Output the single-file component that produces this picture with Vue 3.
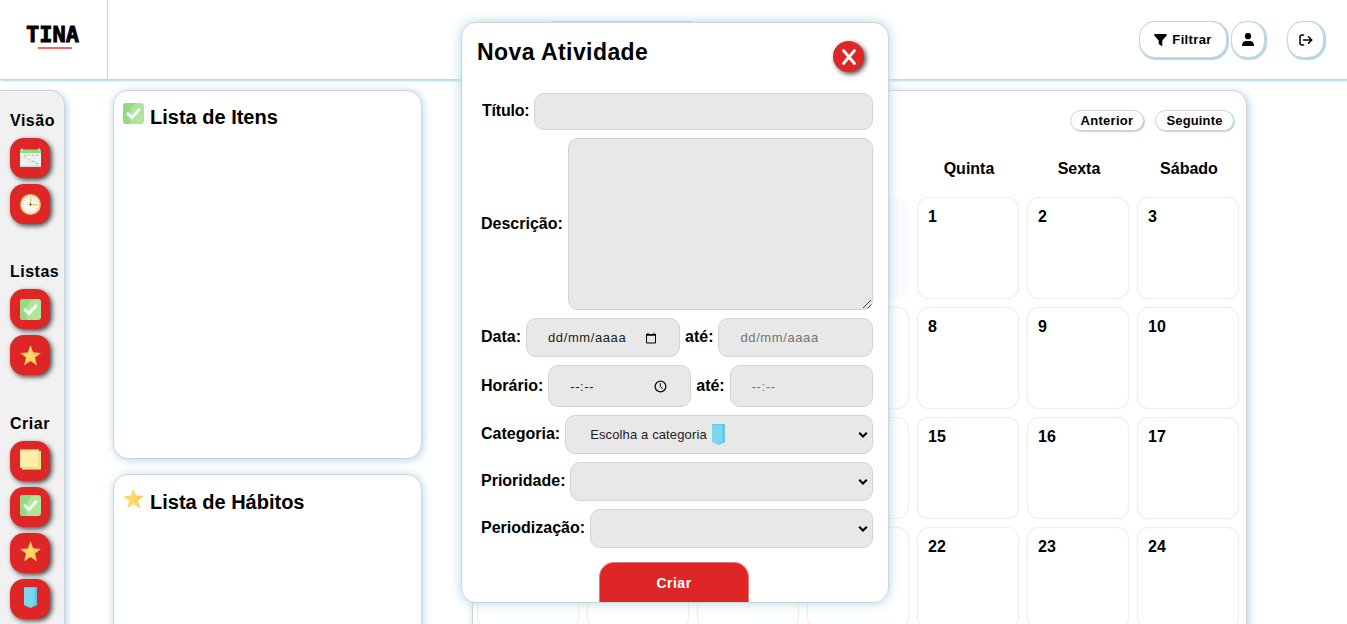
<script setup>
const groups = [
  { title: 'Visão', icons: ['calendar', 'clock'] },
  { title: 'Listas', icons: ['check', 'star'] },
  { title: 'Criar', icons: ['note', 'check', 'star', 'tag'], raised: true },
]
const weekdays = ['', '', '', '', 'Quinta', 'Sexta', 'Sábado']
const days = Array.from({ length: 28 }, (_, i) => ({
  off: i < 4,
  label: i % 7 > 3 ? i - 3 : '',
}))
</script>

<template>
  <svg class="sprite" aria-hidden="true">
    <symbol id="calendar" viewBox="0 0 21 21">
      <rect x="0" y="2" width="21" height="17" rx="1" fill="#f1f4f5" />
      <rect x="0" y="17.500" width="21" height="1.500" fill="#d5d9dc" />
      <path d="M0 5V2.500q0-1 1-1h19q1 0 1 1V5z" fill="#8fdc7c" />
      <path d="M2 .5v2.500M19 .5v2.500" stroke="#dce8dc" stroke-width="1.500" />
      <path d="M4 7.200h2.500m1.500 0h2.500m1.500 0h2.500m1.500 0h2.500" stroke="#8fcf88" stroke-width="1" />
      <path d="M3.500 9.500h3M7.500 11.500h3" stroke="#ffd778" stroke-width="2" />
      <path d="M11.500 13.500h3M15.500 15.500h3" stroke="#a0dd98" stroke-width="2" />
      <path d="M7 8.500v8M11 8.500v8M15 8.500v8M3 10.500h16M3 14h16" stroke="#dfe3e4" stroke-width=".4" />
    </symbol>
    <symbol id="clock" viewBox="0 0 21 21">
      <circle cx="10.500" cy="10.500" r="9.700" fill="#f8f7f2" stroke="#f8c456" stroke-width="1.600" />
      <path d="M10.500 3v7.500H18" fill="none" stroke="#f5c04e" stroke-width="1" />
      <path d="M9 10.500h3M10.500 9v3" stroke="#666" stroke-width=".9" />
      <circle cx="10.500" cy="10.500" r="7.300" fill="none" stroke="#9a9a9a" stroke-width=".8" stroke-dasharray=".8 3.022" />
    </symbol>
    <symbol id="check" viewBox="0 0 21 21">
      <rect width="21" height="21" rx="3" fill="#afe59b" />
      <path d="M3 0h10Q6 6 6 13q0 5 2 8H3q-3 0-3-3V3q0-3 3-3z" fill="#97d983" />
      <path d="M5 10.800l4 3.700 7-7.700" fill="none" stroke="#fff" stroke-width="2.800" stroke-linecap="round" stroke-linejoin="round" />
      <path d="M5 10.800l1.500 1.400" stroke="#dff4fb" stroke-width="2.600" stroke-linecap="round" />
    </symbol>
    <symbol id="star" viewBox="0 0 21 21">
      <path d="M10.500 .3l2.700 7.200 7.600.4-5.900 4.700 2 7.700-6.400-4.200-6.400 4.200 2-7.700L.2 7.900l7.600-.4z" fill="#ffd766" />
      <path d="M10.500 .3l2.700 7.200 7.600.4-5.900 4.700 2 7.700-2.500-1.600Q15 11 10.500 .3z" fill="#ffc454" opacity=".7" />
    </symbol>
    <symbol id="note" viewBox="0 0 21 21">
      <path d="M2 2h19v18.500H2z" fill="#e3ec94" />
      <path d="M0 .5h19v16L17 18.500H0z" fill="#ffedaa" />
      <path d="M0 .7h19" stroke="#e8a75a" stroke-width="1" stroke-dasharray="1.300 .7" />
      <path d="M0 18.500h17l2-2M18.700 2v15" fill="none" stroke="#f4cf78" stroke-width=".8" />
    </symbol>
    <symbol id="tag" viewBox="0 0 21 21">
      <path d="M4 0h13v18l-6.500 3L4 18z" fill="#7ad7ee" />
      <path d="M14.500 0H17v18l-6.500 3v-1l4-2.500z" fill="#5dc8ec" />
      <path d="M4 0h13v1H4z" fill="#5dc8ec" />
    </symbol>
    <symbol id="chevron" viewBox="0 0 10 8">
      <path d="M1.200 1.700L5 5.500l3.800-3.800" fill="none" stroke="#000" stroke-width="2" />
    </symbol>
  </svg>

  <div class="page">
    <header class="top">
      <div class="brand"><div class="logo">TINA</div></div>
      <div class="month"></div>
      <div class="actions">
        <button class="pill filter">
          <svg width="13" height="12" viewBox="0 0 13 12"><path d="M.8 0h11.400q1 .5.500 1.500L8.300 6.500V11.500q-.4.700-1 .3L4.700 9.900V6.500L.3 1.500Q-.2.500.8 0z" /></svg>
          <span>Filtrar</span>
        </button>
        <button class="pill user">
          <svg width="12" height="13" viewBox="0 0 12 13"><circle cx="6" cy="3.200" r="3.100" /><path d="M0 13q0-5 4.500-5h3q4.500 0 4.500 5z" /></svg>
        </button>
        <button class="pill exit">
          <svg width="14" height="12" viewBox="0 0 14 12" fill="none" stroke="#000" stroke-width="1.500" stroke-linecap="round" stroke-linejoin="round"><path d="M4.500 1H3Q1 1 1 3v6q0 2 2 2h1.500M4.500 6h8M9.500 2.800L12.800 6 9.500 9.200" /></svg>
        </button>
      </div>
    </header>

    <main class="content">
      <nav class="side">
        <section v-for="g in groups" :key="g.title" class="group">
          <h4>{{ g.title }}</h4>
          <button v-for="i in g.icons" :key="i" class="tool" :class="{ raised: g.raised }">
            <svg width="21" height="21"><use :href="'#' + i" /></svg>
          </button>
        </section>
      </nav>

      <div class="lists">
        <section class="card">
          <svg width="21" height="21"><use href="#check" /></svg>
          <h3>Lista de Itens</h3>
        </section>
        <section class="card habits">
          <svg width="21" height="21"><use href="#star" /></svg>
          <h3>Lista de Hábitos</h3>
        </section>
      </div>

      <section class="calendar">
        <div class="nav"><button class="mini prev">Anterior</button><button class="mini next">Seguinte</button></div>
        <div class="grid heads"><span v-for="(w, i) in weekdays" :key="i">{{ w }}</span></div>
        <div class="grid">
          <div v-for="(d, i) in days" :key="i" class="day" :class="{ off: d.off }">{{ d.label }}</div>
        </div>
      </section>
    </main>

    <form class="modal" @submit.prevent>
      <div class="modal-head">
        <h2>Nova Atividade</h2>
        <button type="button" class="close">
          <svg width="16" height="18" viewBox="0 0 16 18"><path d="M2.500 2.500l11 13M13.500 2.500l-11 13" stroke="#fff" stroke-width="2.800" stroke-linecap="round" /></svg>
        </button>
      </div>
      <div class="row title"><label>Título:</label><div class="field"></div></div>
      <div class="row desc">
        <label>Descrição:</label>
        <div class="field">
          <svg width="10" height="10" viewBox="0 0 10 10"><path d="M1 9L9 1M5.500 9.500l4-4" stroke="#444" stroke-width="1" /></svg>
        </div>
      </div>
      <div class="row date">
        <label>Data:</label>
        <div class="field first"><span>dd/mm/aaaa</span>
          <svg width="12" height="12" viewBox="0 0 12 12"><path d="M1.500 2.500h9v8.500h-9z" fill="none" stroke="#000" /><path d="M1 2h10v1.800H1zM2.500 .8h1V2h-1zM8.500 .8h1V2h-1z" /></svg>
        </div>
        <label>até:</label>
        <div class="field muted"><span>dd/mm/aaaa</span></div>
      </div>
      <div class="row time">
        <label>Horário:</label>
        <div class="field first"><span>--:--</span>
          <svg width="13" height="13" viewBox="0 0 13 13" fill="none" stroke="#111"><circle cx="6.500" cy="6.500" r="5.400" stroke-width="1.300" /><path d="M6.300 3v3.700l2.500 1.800" /></svg>
        </div>
        <label>até:</label>
        <div class="field muted"><span>--:--</span></div>
      </div>
      <div class="row select">
        <label>Categoria:</label>
        <div class="field"><span>Escolha a categoria</span><svg class="tag" width="21" height="21"><use href="#tag" /></svg><svg class="chev" width="10" height="8"><use href="#chevron" /></svg></div>
      </div>
      <div class="row select">
        <label>Prioridade:</label>
        <div class="field"><svg class="chev" width="10" height="8"><use href="#chevron" /></svg></div>
      </div>
      <div class="row select">
        <label>Periodização:</label>
        <div class="field"><svg class="chev" width="10" height="8"><use href="#chevron" /></svg></div>
      </div>
      <button class="submit">Criar</button>
    </form>
  </div>
</template>

<style>
body { background: #fff; overflow: hidden; }
</style>

<style scoped>
* { box-sizing: border-box; }
.sprite { position: absolute; width: 0; height: 0; }
.page {
  position: relative; height: 624px; overflow: hidden; color: #000;
  font: bold 16px "Liberation Sans", Arial, sans-serif; letter-spacing: .5px;
}
h2, h3, h4 { margin: 0; }
button { font: inherit; letter-spacing: inherit; color: #000; padding: 0; margin: 0; background: #fff; border: 1px solid lightgray; }
svg { display: block; flex: none; }
.top {
  display: flex; height: 80px; border-bottom: 1px solid lightgray;
  box-shadow: 1px 1px 2px lightblue;
}
.brand { width: 108px; border-right: 1px solid lightgray; padding: 21px 0 0 26px; }
.logo {
  width: 54px; height: 27px; font: bold 22px/27px "DejaVu Sans Mono", monospace; letter-spacing: 0;
  -webkit-text-stroke: .9px #000; position: relative;
}
.logo::after { content: ""; position: absolute; left: 12px; top: 26px; width: 34px; height: 1.500px; background: #ff6464; }
.month { width: 165px; height: 38px; margin: 21px 0 0 432px; border: 1px solid lightgray; border-radius: 15px; }
.actions { display: flex; margin: 21px 23px 0 auto; }
.pill {
  height: 37px; border-radius: 16px; box-shadow: 1px 1px 1px 1px lightblue;
  display: flex; align-items: center; justify-content: center; font-size: 13px; gap: 5px; letter-spacing: .35px;
}
.filter { width: 88px; }
.user { width: 34px; margin-left: 4px; }
.exit { width: 37px; margin-left: 22px; }

.content { display: flex; align-items: flex-start; padding-top: 10px; }
.side {
  width: 65px; height: 560px; background: #f1f1f1; border: 1px solid lightgray; border-left: 0;
  border-radius: 0 15px 0 0; box-shadow: 2px 2px 6px lightblue; padding: 21px 0 0 10px;
}
.group { margin-bottom: 38px; }
.group:nth-child(2) { margin-bottom: 39px; }
.group h4 { font-size: 16px; line-height: 18px; margin-bottom: 8px; white-space: nowrap; }
.group + .group h4 { padding-top: 1px; }
.tool {
  display: flex; width: 40px; height: 40px; padding: 10px; border: 0; border-radius: 14px;
  background: #df2626; box-shadow: 2px 2px 5px #444;
}
.tool + .tool { margin-top: 6px; }
.tool.raised { padding-top: 8px; }
.lists { margin-left: 48px; display: grid; gap: 15px; }
.card {
  width: 309px; height: 369px; background: #fff; border: 1px solid lightgray; border-radius: 15px;
  box-shadow: 1px 1px 8px lightblue; display: flex; padding: 12px 9px; gap: 6px;
}
.card h3 { font-size: 20px; line-height: 23px; margin-top: 3px; letter-spacing: 0; }
.habits { padding-top: 13px; }
.calendar {
  margin-left: 50px; width: 775px; height: 600px; background: #fff; border: 1px solid lightgray;
  border-radius: 15px; box-shadow: 2px 2px 8px lightblue; padding: 19px 7px 0 4px;
}
.nav { display: flex; justify-content: flex-end; gap: 11px; padding-right: 5px; }
.mini { height: 21px; border-radius: 11px; font-size: 13px; box-shadow: 1px 1px 1px lightblue; }
.prev { width: 74px; letter-spacing: .3px; }
.next { width: 79px; letter-spacing: .15px; }
.grid { display: grid; grid-template-columns: repeat(7, 102px); gap: 8px; letter-spacing: 0; }
.heads { height: 18px; margin: 29px 0 19px; line-height: 18px; text-align: center; }
.heads span { padding-left: 2px; }
.day { height: 102px; border: 1px solid #efefec; border-radius: 12px; padding: 10px; line-height: 18px; background: #fff; box-shadow: 0 0 1px #e6e6e0; }
.day.off { background: #fcfaff; border-color: #fcfaff; box-shadow: none; }

.modal {
  position: absolute; left: 461px; top: 22px; width: 428px; height: 581px; background: #fff;
  border: 1px solid lightgray; border-radius: 15px; box-shadow: 0 0 12px lightblue;
  padding: 0 15px; display: flex; flex-direction: column;
}
.modal-head { display: flex; justify-content: space-between; height: 70px; }
h2 { font-size: 23px; line-height: 28px; margin-top: 15px; letter-spacing: .43px; }
.close {
  width: 31px; height: 31px; border: 0; border-radius: 50%; background: #df2626; margin: 18px 9px 0 0;
  box-shadow: 2px 2px 5px #444; display: flex; align-items: center; justify-content: center;
}
.row { display: flex; align-items: center; gap: 5px; padding-left: 4px; margin-bottom: 8px; letter-spacing: 0; }
.row label { white-space: nowrap; line-height: 20px; margin-top: -1px; }
.field {
  flex: 1; height: 100%; background: #e8e8e8; border: 1px solid lightgray; border-radius: 10px;
  display: flex; align-items: center; font-size: 13px; font-weight: normal; letter-spacing: .6px; color: #222;
}
.muted { color: #757575; }
.title { height: 37px; padding-left: 5px; letter-spacing: -.2px; }
.desc { height: 172px; }
.desc .field { align-items: flex-end; justify-content: flex-end; }
.date { height: 39px; }
.date .field { padding-left: 21px; }
.date .first { flex: 0 0 154px; justify-content: space-between; padding-right: 22px; }
.time { height: 42px; }
.time .field { padding-left: 21px; }
.time .first { flex: 0 0 143px; justify-content: space-between; padding-right: 23px; }
.select { height: 39px; }
.select .field { padding-left: 24px; letter-spacing: .13px; }
.tag { margin-left: 1px; }
.chev { margin: 0 4px 0 auto; }
.submit {
  width: 150px; height: 40px; margin: auto auto 0 122px; flex: none; border: 1px solid #e57a7a; border-bottom: 0; border-radius: 15px 15px 0 0;
  background: #df2626; color: #fff; font-size: 14px; letter-spacing: .5px;
}
</style>
